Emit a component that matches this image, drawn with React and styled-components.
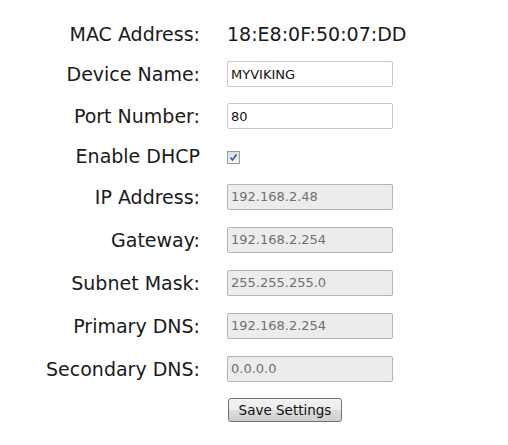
import React from "react";
import styled, { createGlobalStyle } from "styled-components";

const Global = createGlobalStyle`
  html, body { margin: 0; padding: 0; background: #fff; }
  body { font-family: "DejaVu Sans", Verdana, sans-serif; }
`;

const Form = styled.div`
  padding-top: 23px;
  display: flex;
  flex-direction: column;
  gap: 16px;
`;

const Row = styled.div`
  display: grid;
  grid-template-columns: 200px 166px;
  column-gap: 27px;
  align-items: center;
  height: ${(p) => p.$h || 26}px;
`;

const Label = styled.div`
  text-align: right;
  font-size: 19px;
  color: #1a1a1a;
  white-space: nowrap;
  line-height: 22px;
`;

const Value = styled.div`
  font-size: 19px;
  color: #1a1a1a;
  white-space: nowrap;
  line-height: 22px;
`;

const Input = styled.input`
  box-sizing: border-box;
  width: 166px;
  height: 26px;
  margin: 0;
  padding: 0 3px;
  border: 1px solid ${(p) => (p.disabled ? "#b4b4b4" : "#c8c8c8")};
  border-radius: 2px;
  background: ${(p) => (p.disabled ? "#ececec" : "#fff")};
  color: ${(p) => (p.disabled ? "#707070" : "#111")};
  font-family: "DejaVu Sans", Verdana, sans-serif;
  font-size: 13px;
  outline: none;
  -webkit-text-fill-color: ${(p) => (p.disabled ? "#707070" : "#111")};
  opacity: 1;
`;

const Check = styled.span`
  display: inline-flex;
  align-items: center;
  justify-content: center;
  box-sizing: border-box;
  width: 13px;
  height: 13px;
  border: 1px solid #9a9a9a;
  background: linear-gradient(#dcdcdc, #f6f6f6);
`;

const Button = styled.button`
  box-sizing: border-box;
  width: 114px;
  height: 24px;
  margin: 0 0 0 1px;
  padding: 0;
  border: 1px solid #707070;
  border-radius: 3px;
  background: linear-gradient(#f2f2f2 0%, #ebebeb 50%, #dddddd 51%, #cfcfcf 100%);
  font-family: "DejaVu Sans", Verdana, sans-serif;
  font-size: 13.5px;
  color: #111;
`;

const fields = [
  ["IP Address:", "192.168.2.48"],
  ["Gateway:", "192.168.2.254"],
  ["Subnet Mask:", "255.255.255.0"],
  ["Primary DNS:", "192.168.2.254"],
  ["Secondary DNS:", "0.0.0.0"],
];

export default function App() {
  return (
    <>
      <Global />
      <Form>
        <Row $h={22}>
          <Label>MAC Address:</Label>
          <Value>18:E8:0F:50:07:DD</Value>
        </Row>
        <Row>
          <Label>Device Name:</Label>
          <Input defaultValue="MYVIKING" />
        </Row>
        <Row>
          <Label>Port Number:</Label>
          <Input defaultValue="80" />
        </Row>
        <Row $h={22}>
          <Label>Enable DHCP</Label>
          <div>
            <Check>
              <svg width="9" height="9" viewBox="0 0 9 9">
                <path d="M1.5 4.5 L3.5 7 L7.5 1.5" fill="none" stroke="#3b57a8" strokeWidth="1.6" />
              </svg>
            </Check>
          </div>
        </Row>
        {fields.map(([l, v]) => (
          <Row key={l} $h={27}>
            <Label>{l}</Label>
            <Input disabled defaultValue={v} />
          </Row>
        ))}
        <Row $h={24}>
          <div />
          <div>
            <Button>Save Settings</Button>
          </div>
        </Row>
      </Form>
    </>
  );
}
